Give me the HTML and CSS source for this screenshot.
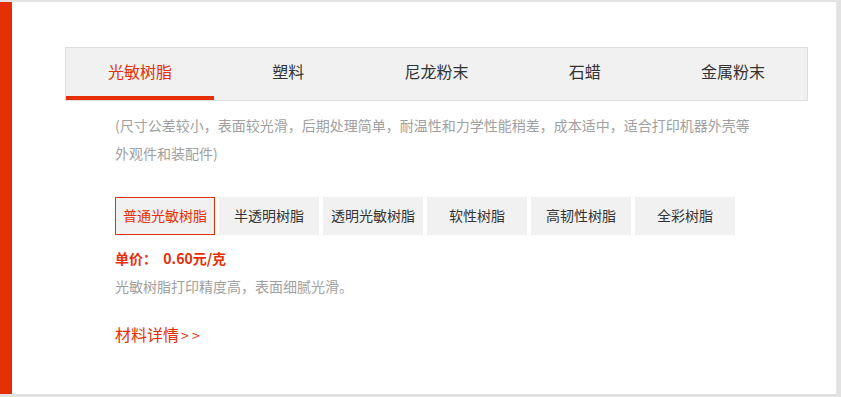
FILE: index.html
```html
<!DOCTYPE html>
<html lang="zh-CN">
<head>
    <meta charset="UTF-8">
    <meta name="viewport" content="width=device-width, initial-scale=1.0">
    <title>材料选择</title>
    <link rel="stylesheet" href="styles.css">
</head>
<body>
    <div class="panel">
        <div class="tabs">
            <div class="tab active">光敏树脂</div>
            <div class="tab">塑料</div>
            <div class="tab">尼龙粉末</div>
            <div class="tab">石蜡</div>
            <div class="tab">金属粉末</div>
        </div>
        <div class="content">
            <p class="desc">(尺寸公差较小，表面较光滑，后期处理简单，耐温性和力学性能稍差，成本适中，适合打印机器外壳等外观件和装配件)</p>
            <div class="materials">
                <div class="material active">普通光敏树脂</div>
                <div class="material">半透明树脂</div>
                <div class="material">透明光敏树脂</div>
                <div class="material">软性树脂</div>
                <div class="material">高韧性树脂</div>
                <div class="material">全彩树脂</div>
            </div>
            <p class="price">单价：&nbsp; 0.60元/克</p>
            <p class="note">光敏树脂打印精度高，表面细腻光滑。</p>
            <a class="more" href="#">材料详情<span class="arrows">&gt; &gt;</span></a>
        </div>
    </div>
</body>
</html>
```

FILE: styles.css
```css
:root {
    --red: #e62e04;
    --text-color: #333;
    --muted: #a0a0a0;
    --border-color: #ddd;
    --tab-bg: #f1f1f1;
}

body {
    margin: 0;
    height: 397px;
    background-color: #e2e2e2;
    font-family: "Microsoft YaHei", "Noto Sans CJK SC", sans-serif;
    color: var(--text-color);
    overflow: hidden;
}

.panel {
    box-sizing: border-box;
    height: 392px;
    margin: 2px 4px 0 0;
    padding: 45px 28px 0 53px;
    background-color: white;
    border-left: 12px solid var(--red);
    border-right: 1px solid #e8e8e8;
}

.tabs {
    display: flex;
    height: 52px;
    border: 1px solid var(--border-color);
    background-color: var(--tab-bg);
}

.tab {
    flex: 1;
    box-sizing: border-box;
    text-align: center;
    font-size: 16px;
    line-height: 46px;
    border-bottom: 4px solid transparent;
    cursor: pointer;
}

.tab.active {
    color: var(--red);
    border-bottom-color: var(--red);
}

.content {
    padding: 10px 50px 0;
}

.desc {
    margin: 0;
    font-size: 14px;
    line-height: 28px;
    color: var(--muted);
}

.materials {
    display: flex;
    gap: 4px;
    margin-top: 30px;
}

.material {
    box-sizing: border-box;
    width: 100px;
    height: 38px;
    line-height: 37px;
    text-align: center;
    font-size: 14px;
    background-color: var(--tab-bg);
    cursor: pointer;
}

.material.active {
    color: var(--red);
    border: 1px solid var(--red);
    line-height: 35px;
}

.price {
    margin: 13px 0 0;
    font-size: 14px;
    line-height: 20px;
    font-weight: bold;
    color: var(--red);
}

.note {
    margin: 8px 0 0;
    font-size: 14px;
    line-height: 20px;
    color: var(--muted);
}

.more {
    display: inline-block;
    margin-top: 26px;
    font-size: 16px;
    line-height: 24px;
    color: var(--red);
    text-decoration: none;
}

.arrows {
    margin-left: 2px;
    font-size: 14px;
}
```
